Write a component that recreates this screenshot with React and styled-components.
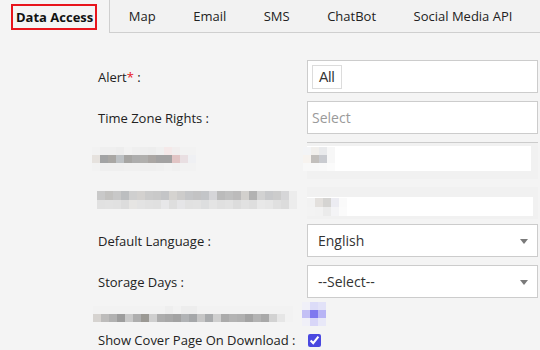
import React from 'react'
import styled, { createGlobalStyle } from 'styled-components'

const GlobalStyle = createGlobalStyle`
  html, body {
    margin: 0;
    padding: 0;
    background: #f4f4f4;
    font-family: "Open Sans", "Liberation Sans", Arial, sans-serif;
  }
`

const Page = styled.div`
  width: 540px;
  height: 350px;
  overflow: hidden;
  background: #f4f4f4;
`

const TabBar = styled.div`
  display: flex;
  height: 32px;
  border-bottom: 1px solid #cfcfcf;
  background: #f2f2f2;
`

const Tab = styled.div`
  display: flex;
  align-items: center;
  font-size: 13px;
  color: #222;
  padding: ${p => (p.$first ? '0 12px 0 11px' : '0 19px 0 18.5px')};
  font-weight: ${p => (p.$active ? 700 : 400)};
  border-right: ${p => (p.$active ? '1px solid #cfcfcf' : 'none')};
  margin-bottom: ${p => (p.$active ? '-1px' : '0')};
  background: ${p => (p.$active ? '#f4f4f4' : 'transparent')};
  white-space: nowrap;
`

const ActiveLabel = styled.span`
  display: inline-flex;
  align-items: center;
  height: 22px;
  padding: 0 2px 0 3px;
  border: 2px solid #e8141c;
  color: #111;
`

const Form = styled.div`
  padding: 23px 0 0 98px;
  display: flex;
  flex-direction: column;
`

const Row = styled.div`
  display: grid;
  grid-template-columns: 209px 231px;
  align-items: center;
  height: ${p => p.$h || 41}px;
`

const Label = styled.div`
  font-size: 13px;
  color: #222;
  white-space: nowrap;
`

const Req = styled.span`
  color: #e8141c;
`

const Field = styled.div`
  box-sizing: border-box;
  height: 33px;
  background: #fff;
  border: 1px solid #cccccc;
  display: flex;
  align-items: center;
  padding: 0 4px;
  font-size: 14px;
  color: #333;
  position: relative;
`

const Chip = styled.span`
  display: inline-flex;
  align-items: center;
  height: 22px;
  padding: 0 6px;
  border: 1px solid #dcdcdc;
  font-family: "Liberation Sans", Arial, sans-serif;
  font-size: 14px;
  color: #333;
`

const Placeholder = styled.span`
  color: #9a9a9a;
`

const SelectText = styled.span`
  padding-left: 6px;
  color: #333;
`

const Caret = styled.span`
  position: absolute;
  right: 9px;
  top: 14px;
  width: 0;
  height: 0;
  border-left: 4px solid transparent;
  border-right: 4px solid transparent;
  border-top: 5px solid #7a7a7a;
`

const BlurField = styled.div`
  box-sizing: border-box;
  height: ${p => p.$h}px;
  margin-top: ${p => p.$top}px;
  border-top: ${p => (p.$line ? '1px solid #cccccc' : 'none')};
  background: #f1f1f1;
  display: flex;
`

const BlurInner = styled.div`
  flex: 1;
  display: flex;
  align-items: stretch;
  background: #fff;
  margin: ${p => p.$m};
`

const Mosaic = styled.div`
  display: grid;
  grid-template-columns: repeat(${p => p.$cols}, ${p => p.$size}px);
  grid-auto-rows: ${p => p.$rowH || p.$size}px;
  margin-left: ${p => p.$ml || 0}px;
  align-self: center;
`

const Cell = styled.div``

const Check = styled.input`
  margin: 0 0 0 1px;
  width: 13px;
  height: 13px;
  accent-color: #4a48e0;
`

function Pixels({ rows, size = 8, rowH, ml }) {
  return (
    <Mosaic $cols={rows[0].length} $size={size} $rowH={rowH} $ml={ml}>
      {rows.flat().map((c, i) => (
        <Cell key={i} style={{ background: c }} />
      ))}
    </Mosaic>
  )
}

const l = '#f2f2f2'
const label3 = [
  [l, '#efefef', '#efefef', '#ededed', l, '#efefef', '#eeeeee', '#ededed', '#f0f0f0', '#f5e9e9', '#f1eeee', l, l],
  ['#e6e2de', '#a2a3a4', '#a9a7a4', '#bdc1c4', '#a6a5a3', '#adadad', '#b0afad', '#aaa6a3', '#a3a2a2', '#a3a2a2', '#e1c4c4', '#e9dfe2', '#eff0f3'],
  [l, '#efefef', '#efefef', '#efefef', '#f0f0f0', '#f0f0f0', '#efefef', '#efefef', '#f0f0f0', l, '#f0f0f0', l, l],
]
const field3 = [
  ['#f3f4f6', '#f1efec', '#e9eaec', '#f7f7f7'],
  ['#f7f3ef', '#c2bfbc', '#c9cbd0', '#f7f7f7'],
  ['#f8f8f8', '#f8f8f8', '#f9f9f9', '#fbfbfb'],
]
const label4 = [
  ['#c9c9c9', '#c3c2c0', '#c8c8c8', '#bcbec0', '#cfcfcf', '#d3d1cf', '#cbcbcb', '#c9c9c9', '#c4c5c7', '#d5d3d0', '#cdcccb', '#c5c6c8', '#c3c3c4', '#c3c5c8', '#d5d5d8', '#bbbbbb', '#c0c0c0', '#bcbbbb', '#d2d0cd', '#b2b2b2', '#d2d2d2', '#c8c9cb', '#cccccc', '#d6d6d8', '#ececec'],
  ['#e1e1e1', '#e2e2e2', '#e1e1e1', '#dcdcdc', '#e6e5e3', '#e3e3e3', '#e1e1e1', '#e0e0e0', '#e7e7e9', '#dedede', '#e5e5e7', '#e1e1e1', '#e2e2e2', '#dddedf', '#e4e4e4', '#e0e0e0', '#e2e2e2', '#dcdcdc', '#e1e1e1', '#dedede', '#e8e8e8', '#e6e6e6', '#e0e0e0', '#dcdcdc', '#ececec'],
]
const field4 = [
  ['#f2f2f2', '#e3e0dd', '#d5d4d2', '#ececf2', '#fafafa'],
  ['#f3f3f3', '#f2f2f2', '#ebebeb', '#f4f4f6', '#fbfbfb'],
]
const label7 = [
  [l, l, l, l, l, l, l, l, l, '#eeeeee', l, '#ededed', '#ededed', l, l, l, l, l, l, l, l, l, l, l, l],
  ['#d6d3d0', '#bdbcbb', '#b1b1b1', '#9d9d9d', '#c9c9c9', '#aeaeae', '#9b9994', '#cfcfcf', '#adadad', '#a8a8a8', '#a2a2a2', '#b1b3b5', '#a5a7a9', '#c6c6c6', '#a9abad', '#cfcfcf', '#ababab', '#b3b3b3', '#b0b0b0', '#a3a3a3', '#b3b3b3', '#a9a9a9', '#d2d2d2', '#e6e6e6', l],
]
const check7 = [
  ['#f0f0f8', '#dcdcf8', '#e2e2f8'],
  ['#c3c0f5', '#7f78ef', '#b8b4f5'],
  ['#f0f0f8', '#d8d6f8', '#e8e8f8'],
]

export default function App() {
  const tabs = ['Map', 'Email', 'SMS', 'ChatBot', 'Social Media API']
  return (
    <Page>
      <GlobalStyle />
      <TabBar>
        <Tab $active $first>
          <ActiveLabel>Data Access</ActiveLabel>
        </Tab>
        {tabs.map(t => (
          <Tab key={t}>{t}</Tab>
        ))}
      </TabBar>

      <Form>
        <Row>
          <Label>
            Alert<Req>*</Req> :
          </Label>
          <Field>
            <Chip>All</Chip>
          </Field>
        </Row>

        <Row>
          <Label>Time Zone Rights :</Label>
          <Field>
            <Placeholder>Select</Placeholder>
          </Field>
        </Row>

        <Row>
          <Pixels rows={label3} size={8} rowH={8} ml={-6} />
          <BlurField $h={37} $top={4} $line>
            <BlurInner $m="3px 7px 8px 0">
              <Pixels rows={field3} size={8} rowH={8} ml={-4} />
            </BlurInner>
          </BlurField>
        </Row>

        <Row>
          <Pixels rows={label4} size={8} rowH={9} ml={-1} />
          <BlurField $h={32} $top={7}>
            <BlurInner $m="10px 5px 3px 0">
              <Pixels rows={field4} size={8} rowH={9} ml={0} />
            </BlurInner>
          </BlurField>
        </Row>

        <Row>
          <Label>Default Language :</Label>
          <Field>
            <SelectText>English</SelectText>
            <Caret />
          </Field>
        </Row>

        <Row>
          <Label>Storage Days :</Label>
          <Field>
            <SelectText>--Select--</SelectText>
            <Caret />
          </Field>
        </Row>

        <Row $h={23}>
          <Pixels rows={label7} size={8} rowH={8} ml={-5} />
          <Pixels rows={check7} size={8} rowH={8} ml={-5} />
        </Row>

        <Row $h={30}>
          <Label>Show Cover Page On Download :</Label>
          <Check type="checkbox" defaultChecked readOnly />
        </Row>
      </Form>
    </Page>
  )
}
